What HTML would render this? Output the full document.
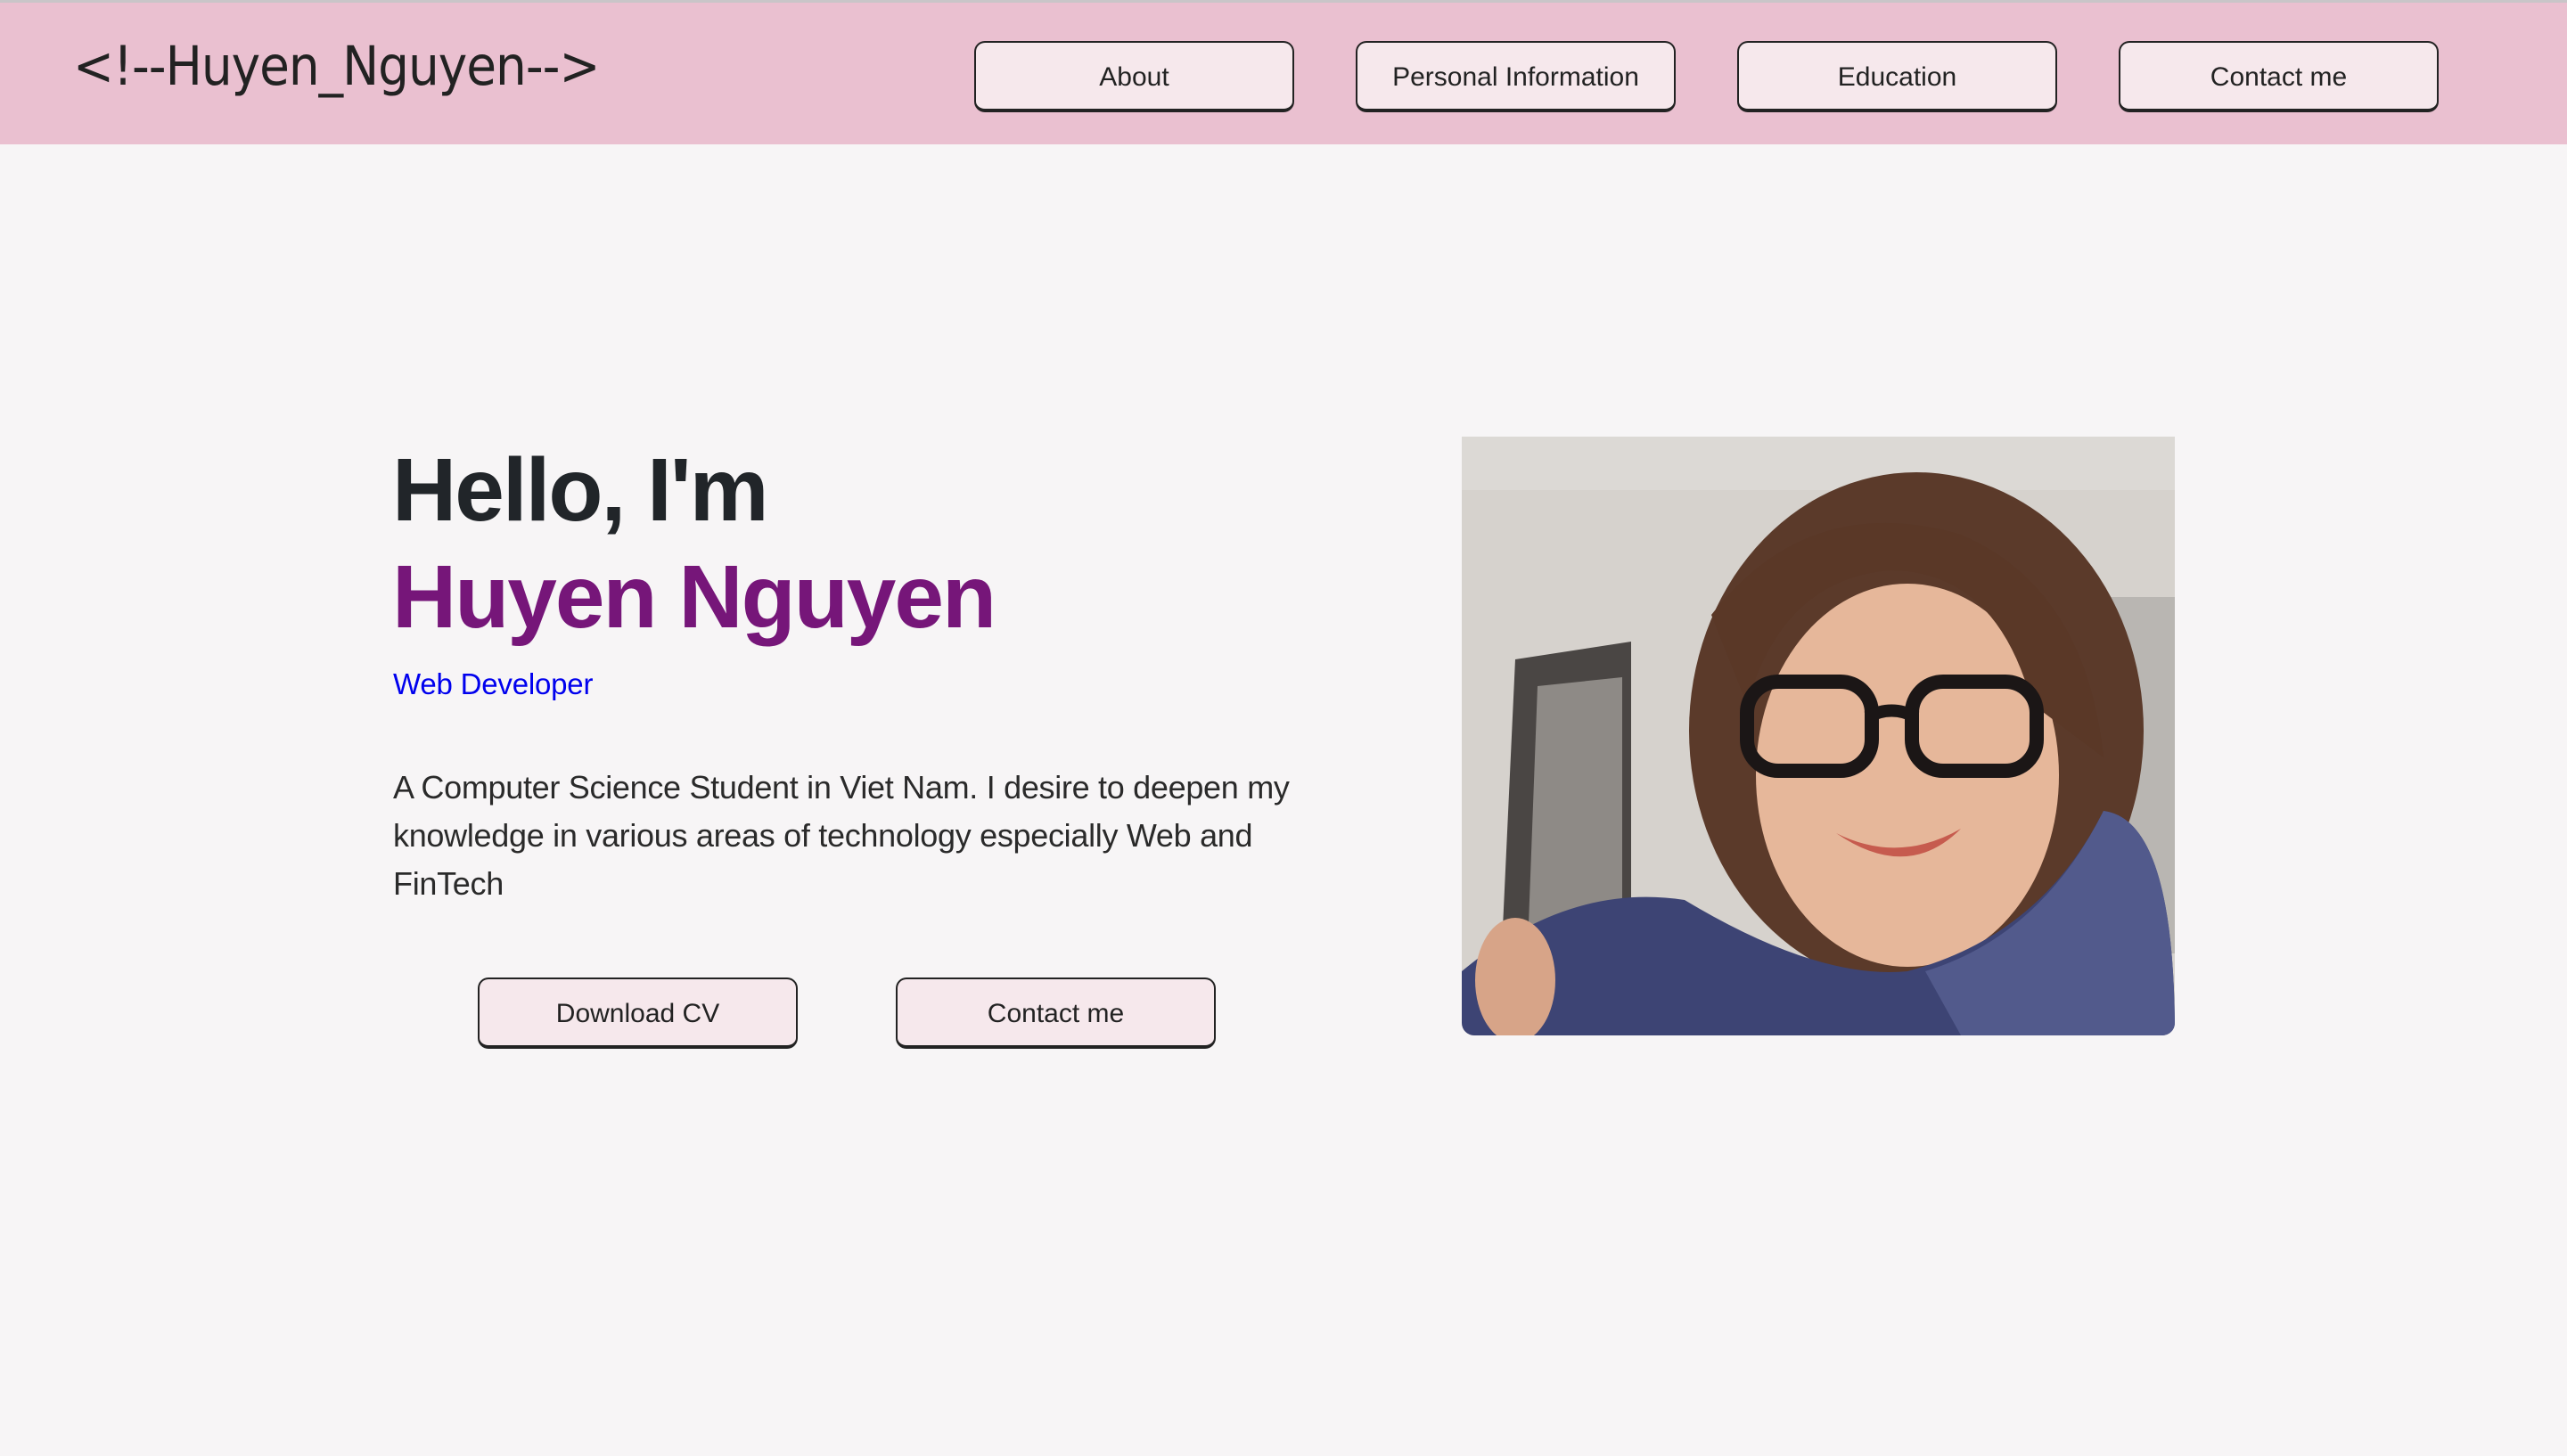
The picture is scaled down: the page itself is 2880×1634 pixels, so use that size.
<!DOCTYPE html>
<html><head><meta charset="utf-8"><style>
*{margin:0;padding:0;box-sizing:border-box}
html,body{width:2880px;height:1634px;overflow:hidden;background:#f7f5f6;font-family:"Liberation Sans",sans-serif;color:#212529}
.top{position:absolute;left:0;top:0;width:2880px;height:3px;background:#c9c5c8}
header{position:absolute;left:0;top:3px;width:2880px;height:159px;background:#eac0d0}
.logo{position:absolute;left:82px;top:36px;font-size:61px;color:#222;font-family:"DejaVu Sans Condensed","Liberation Sans Narrow","Liberation Sans",sans-serif;letter-spacing:-1px}
.btn{position:absolute;width:359px;height:80px;border:2px solid #222;border-bottom-width:4px;border-radius:12px;background:#f6e8ec;font-size:30px;display:flex;align-items:center;justify-content:center;color:#222;padding-top:3px}
h1{position:absolute;left:440px;font-weight:bold;font-size:100px;letter-spacing:-2px;line-height:1}
.role{position:absolute;left:441px;top:749px;font-size:33px;color:#0000ee;letter-spacing:-0.2px}
p{position:absolute;left:441px;top:857px;width:1080px;font-size:36px;line-height:54px;color:#2a2a2a;letter-spacing:-0.3px}
.photo{position:absolute;left:1640px;top:490px;width:800px;height:672px;border-radius:0 0 14px 14px;overflow:hidden;background:#cfcbc6}
</style></head><body>
<div class="top"></div>
<header><div class="logo">&lt;!--Huyen_Nguyen--&gt;</div></header>
<div class="btn" style="left:1093px;top:46px">About</div>
<div class="btn" style="left:1521px;top:46px">Personal Information</div>
<div class="btn" style="left:1949px;top:46px">Education</div>
<div class="btn" style="left:2377px;top:46px">Contact me</div>
<h1 style="top:500px">Hello, I'm</h1>
<h1 style="top:620px;color:#761679">Huyen Nguyen</h1>
<div class="role">Web Developer</div>
<p>A Computer Science Student in Viet Nam. I desire to deepen my knowledge in various areas of technology especially Web and FinTech</p>
<div class="btn" style="left:536px;top:1097px">Download CV</div>
<div class="btn" style="left:1005px;top:1097px">Contact me</div>
<div class="photo">
<svg width="800" height="672" viewBox="0 0 800 672">
<rect width="800" height="672" fill="#d6d2cd"/>
<rect x="0" y="0" width="800" height="60" fill="#dcd9d5"/>
<polygon points="40,680 60,250 190,230 190,680" fill="#4a4644"/>
<polygon points="70,680 85,280 180,270 180,680" fill="#8e8a86"/>
<rect x="640" y="180" width="160" height="400" fill="#b9b6b2"/>
<ellipse cx="510" cy="330" rx="255" ry="290" fill="#5b3a2a"/>
<ellipse cx="500" cy="380" rx="170" ry="215" fill="#e6b79a"/>
<path d="M280 200 Q390 60 560 110 Q700 170 720 360 L640 300 Q600 150 480 150 Q360 160 320 300 Z" fill="#5a3827"/>
<rect x="320" y="275" width="140" height="100" rx="35" fill="none" stroke="#1b1616" stroke-width="16"/>
<rect x="505" y="275" width="140" height="100" rx="35" fill="none" stroke="#1b1616" stroke-width="16"/>
<path d="M455 315 Q482 300 510 315" stroke="#1b1616" stroke-width="14" fill="none"/>
<path d="M420 445 Q490 480 560 440 Q500 500 420 445Z" fill="#c65b4e"/>
<path d="M0 672 L0 600 Q120 500 250 520 Q400 610 500 600 Q650 560 720 420 Q800 430 800 672Z" fill="#3d4474"/>
<path d="M520 600 Q650 560 720 420 Q800 430 800 672 L560 672Z" fill="#525a8c"/>
<ellipse cx="60" cy="610" rx="45" ry="70" fill="#d7a488"/>
</svg>
</div>
</body></html>
